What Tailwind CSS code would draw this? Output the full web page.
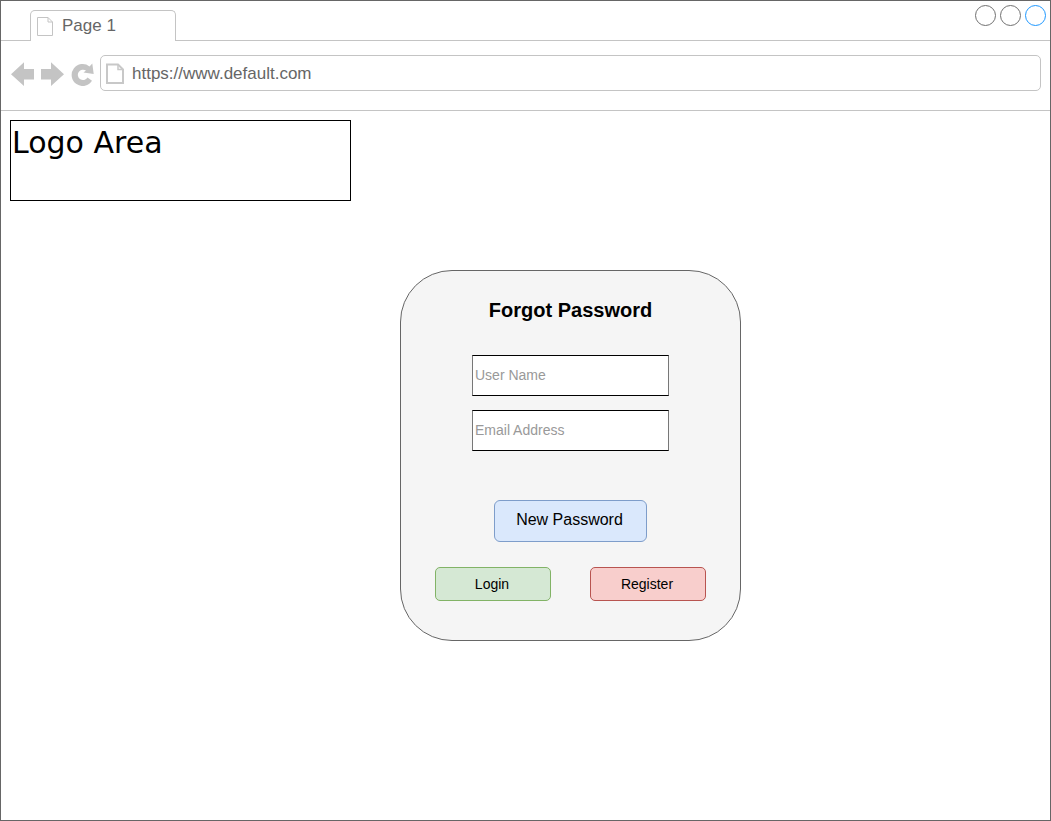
<!DOCTYPE html>
<html lang="en">
<head>
<meta charset="utf-8">
<meta name="viewport" content="width=device-width, initial-scale=1">
<title>Forgot Password</title>
<script src="https://cdn.jsdelivr.net/npm/@tailwindcss/browser@4"></script>
</head>
<body class="bg-white font-['Liberation_Sans',Arial,sans-serif]">
<div class="flex min-h-screen flex-col border border-[#666666]">
  <!-- Tab strip -->
  <header class="flex h-10 items-end">
    <div class="w-[29px] border-b border-[#c4c4c4]"></div>
    <div class="flex h-[31px] w-[146px] items-center rounded-t-[5px] border border-b-0 border-[#c4c4c4] pl-[6px] text-[17px] leading-5 text-[#666666]">
      <svg class="mr-[9px] h-[19px] w-4" viewBox="0 0 16 19" fill="none" stroke="#c4c4c4" aria-hidden="true"><path d="M.5.5H11L15.5 5V18.5H.5ZM11 .5V5H15.5"/></svg>
      <span>Page 1</span>
    </div>
    <div class="flex h-full flex-1 justify-end gap-1 border-b border-[#c4c4c4] pt-1 pr-1">
      <button type="button" aria-label="Minimize" class="size-[21px] rounded-full border border-[#707070]"></button>
      <button type="button" aria-label="Maximize" class="size-[21px] rounded-full border border-[#707070]"></button>
      <button type="button" aria-label="Close" class="size-[21px] rounded-full border border-[#1e98ff]"></button>
    </div>
  </header>

  <!-- Navigation bar -->
  <nav class="flex h-[70px] items-start border-b border-[#c4c4c4] pt-[14px] pr-[9px] pl-[10px]">
    <div class="flex h-[38px] w-[89px] shrink-0 items-center gap-[7px]">
      <button type="button" aria-label="Back"><svg class="block h-6 w-[23px]" viewBox="0 0 23 24" fill="#c4c4c4"><path d="M0 12.3 13 .3V7H23V17.5H13V24Z"/></svg></button>
      <button type="button" aria-label="Forward"><svg class="block h-6 w-[23px]" viewBox="0 0 23 24" fill="#c4c4c4"><path d="M23 12.3 10 .3V7H0V17.5H10V24Z"/></svg></button>
      <button type="button" aria-label="Reload"><svg class="block h-6 w-[23px]" viewBox="0 0 23 24" fill="#c4c4c4"><path d="M18.5 4.4 21.3 1.6 22.7 12 12.5 10.4 15 8.6A5.2 5.2 0 1 0 16.5 15.6L21 18.8A11 11 0 1 1 18.5 4.4Z"/></svg></button>
    </div>
    <div class="flex h-9 flex-1 items-center rounded-[5px] border border-[#c4c4c4] pl-[5px]">
      <svg class="mr-[8px] h-[21px] w-[18px]" viewBox="0 0 18 21" fill="none" stroke="#c8c8c8" stroke-width="2" aria-hidden="true"><path d="M1 1.5H12L17 6.5V20H1Z"/><path d="M12 1.5V6.5H17" stroke-width="1.5"/></svg>
      <input type="text" aria-label="Address" value="https://www.default.com" class="h-full min-w-0 flex-1 pt-[2px] text-[17px] text-[#666666] outline-none">
    </div>
  </nav>

  <!-- Page content -->
  <main class="flex flex-1 flex-col items-start p-[9px]">
    <div class="h-[81px] w-[341px] border border-black px-px pt-[2px] font-['DejaVu_Sans',Verdana,sans-serif] text-[30px] leading-10">Logo Area</div>
    <div class="mt-[69px] flex w-full justify-center pl-[90px]">
      <form class="flex h-[371px] w-[341px] flex-col items-center rounded-[52px] border border-[#666666] bg-[#f5f5f5] pt-[27px]">
        <h1 class="text-[20px] leading-6 font-bold">Forgot Password</h1>
        <input type="text" aria-label="User Name" placeholder="User Name" class="mt-[33px] h-[41px] w-[197px] border border-x-[#777777] border-y-black bg-white px-[2px] pb-[2px] text-[14px] placeholder:text-[#999999]">
        <input type="email" aria-label="Email Address" placeholder="Email Address" class="mt-[14px] h-[41px] w-[197px] border border-x-[#777777] border-y-black bg-white px-[2px] pb-[2px] text-[14px] placeholder:text-[#999999]">
        <button type="submit" class="mt-[49px] h-[42px] w-[153px] rounded-md border border-[#7e9dca] bg-[#dae8fc] pr-[2px] pb-[3px] text-[16px]">New Password</button>
        <div class="mt-[25px] flex gap-[39px]">
          <button type="button" class="h-[34px] w-[116px] rounded-[5px] border border-[#82b366] bg-[#d5e8d4] pr-[2px] text-[14px]">Login</button>
          <button type="button" class="h-[34px] w-[116px] rounded-[5px] border border-[#b85450] bg-[#f8cecc] pr-[2px] text-[14px]">Register</button>
        </div>
      </form>
    </div>
  </main>
</div>
</body>
</html>
